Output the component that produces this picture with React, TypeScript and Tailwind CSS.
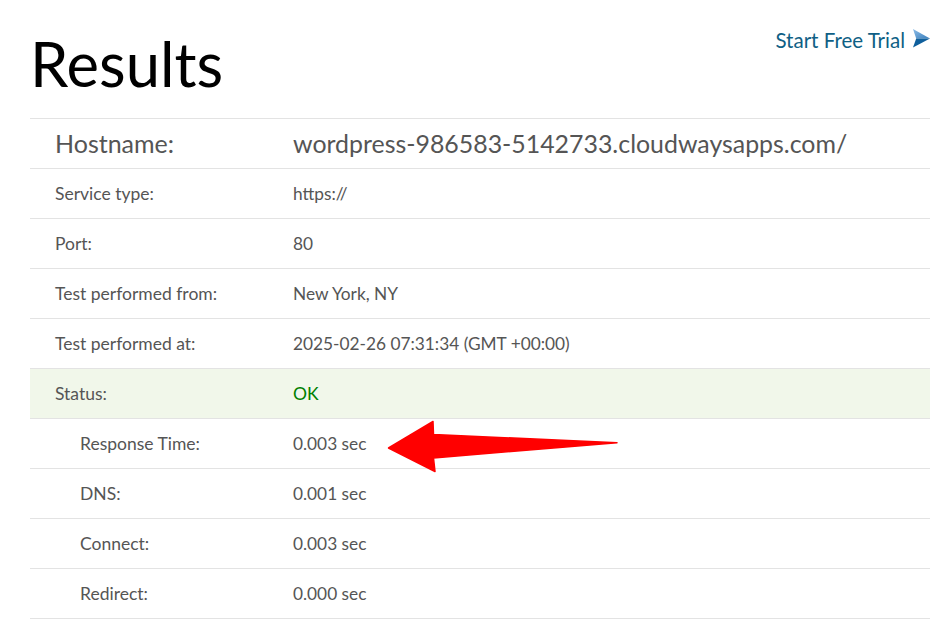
import React from "react";

type Row = { label: string; value: string; sub?: boolean; ok?: boolean };

const rows: Row[] = [
  { label: "Service type:", value: "https://" },
  { label: "Port:", value: "80" },
  { label: "Test performed from:", value: "New York, NY" },
  { label: "Test performed at:", value: "2025-02-26 07:31:34 (GMT +00:00)" },
  { label: "Status:", value: "OK", ok: true },
  { label: "Response Time:", value: "0.003 sec", sub: true },
  { label: "DNS:", value: "0.001 sec", sub: true },
  { label: "Connect:", value: "0.003 sec", sub: true },
  { label: "Redirect:", value: "0.000 sec", sub: true },
];

export default function App() {
  return (
    <div className="relative h-[631px] w-[941px] overflow-hidden bg-white font-['Lato','Open_Sans',sans-serif] text-[#555]">
      <div className="flex h-[118px] items-start justify-between pl-[30px] pr-[11px]">
        <h1 className="mt-[24px] text-[61.5px] leading-[78px] font-normal text-black">Results</h1>
        <a href="#" className="mt-[26px] flex items-center gap-[7px] text-[20.5px] leading-[28px] text-[#0f5f85]">
          Start Free Trial
          <svg width="18" height="19" viewBox="0 0 18 19" className="mt-[-4px]">
            <defs>
              <linearGradient id="g" x1="0" y1="0" x2="1" y2="1">
                <stop offset="0" stopColor="#8dbce6" />
                <stop offset="1" stopColor="#3a7fbd" />
              </linearGradient>
            </defs>
            <path d="M1 0L18 9.5L4.2 9.5Z" fill="url(#g)" />
            <path d="M4.2 9.5L18 9.5L1 18.5Z" fill="#0f5f9c" />
          </svg>
        </a>
      </div>
      <div className="mr-[11px] ml-[30px] border-t border-[#e3e3e3]">
        <div className="flex h-[50px] items-center border-b border-[#e3e3e3] text-[25px]">
          <div className="w-[263px] pl-[25px] text-[#555]">Hostname:</div>
          <div className="text-[24.9px]">wordpress-986583-5142733.cloudwaysapps.com/</div>
        </div>
        {rows.map((r) => (
          <div
            key={r.label}
            className={
              r.ok
                ? "flex h-[50px] items-center border-b border-[#e3e3e3] bg-[#f1f7ea] text-[17.5px]"
                : "flex h-[50px] items-center border-b border-[#e3e3e3] text-[17.5px]"
            }
          >
            <div className={r.sub ? "mt-[1px] w-[263px] pl-[50px]" : "mt-[1px] w-[263px] pl-[25px]"}>{r.label}</div>
            <div className={r.ok ? "mt-[1px] text-[#008000]" : "text-[17.3px]"}>{r.value}</div>
          </div>
        ))}
      </div>
      <svg className="absolute top-0 left-0" width="941" height="631" viewBox="0 0 941 631">
        <path
          d="M388.5 448L433 421.5L433.5 434.5L617 442.7L433.5 458L435 471.5Z"
          fill="#ff0000"
          stroke="#ff0000"
          strokeWidth="1.5"
          strokeLinejoin="round"
        />
      </svg>
    </div>
  );
}
